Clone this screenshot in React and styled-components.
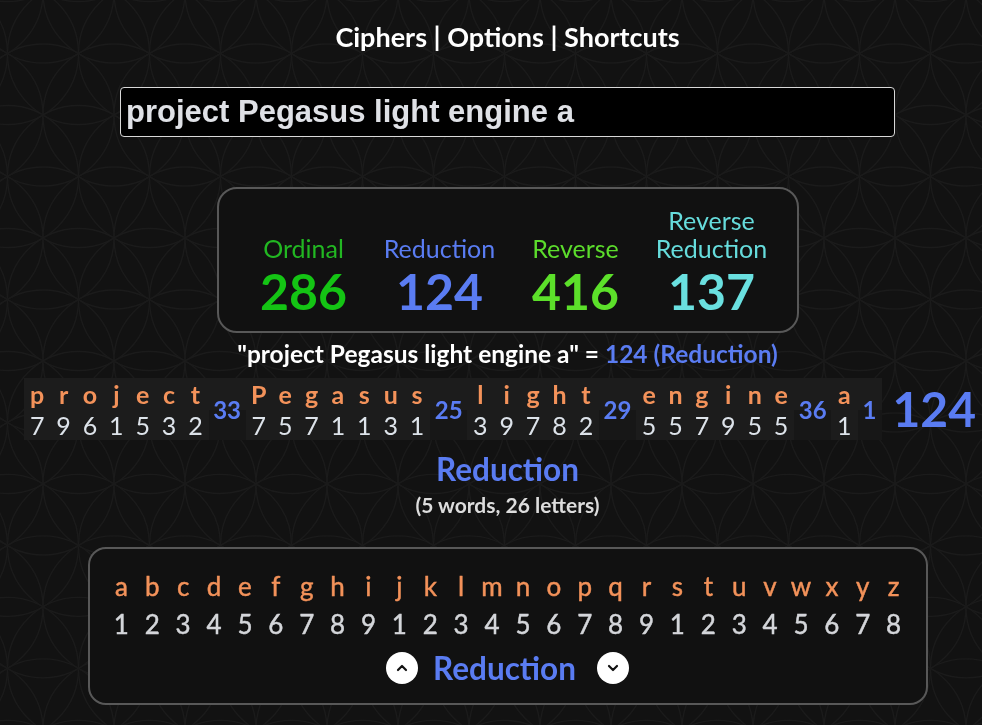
import React from 'react';
import styled, { createGlobalStyle } from 'styled-components';

const GlobalStyle = createGlobalStyle`
  html, body {
    margin: 0;
    padding: 0;
    background: #121212;
    overflow: hidden;
  }
  body {
    font-family: Lato, "Noto Sans", sans-serif;
    color: #e6e6e6;
  }
`;

const BLUE = '#5a7cf2';
const ORANGE = '#f3925a';

const ciphers = [
  { label: ['Ordinal'], value: 286, label_color: '#22b722', color: '#14c414' },
  { label: ['Reduction'], value: 124, label_color: BLUE, color: BLUE },
  { label: ['Reverse'], value: 416, label_color: '#5cdc2c', color: '#5ce02a' },
  { label: ['Reverse', 'Reduction'], value: 137, label_color: '#66dcdc', color: '#6ae0e0' },
];

const reduction = (ch) => {
  const n = ch.toLowerCase().charCodeAt(0) - 96;
  return ((n - 1) % 9) + 1;
};

const phrase = 'project Pegasus light engine a';
const words = phrase.split(' ');
const alphabet = 'abcdefghijklmnopqrstuvwxyz'.split('');

/* flower-of-life backdrop */
const Backdrop = () => {
  const r = 71;
  const dy = (r * Math.sqrt(3)) / 2;
  const circles = [];
  for (let row = -3; row < 16; row++) {
    const y = 115 + row * dy;
    const off = row % 2 === 0 ? 0 : r / 2;
    for (let col = -3; col < 18; col++) {
      circles.push(<circle key={`${row}-${col}`} cx={43 + off + col * r} cy={y} r={r} />);
    }
  }
  return (
    <BackdropSvg width="1015" height="725" viewBox="0 0 1015 725">
      <g fill="none" stroke="#1b1b1b" strokeWidth="1.4">{circles}</g>
    </BackdropSvg>
  );
};

const BackdropSvg = styled.svg`
  position: fixed;
  top: 0;
  left: 0;
  z-index: 0;
  pointer-events: none;
`;

const Page = styled.div`
  position: relative;
  z-index: 1;
  width: 1015px;
  display: flex;
  flex-direction: column;
  align-items: center;
`;

const Nav = styled.div`
  margin-top: 21px;
  font-size: 27px;
  line-height: 32px;
  font-weight: 700;
  color: #ffffff;
`;

const PhraseInput = styled.input`
  box-sizing: border-box;
  margin-top: 34px;
  width: 775px;
  height: 50px;
  background: #000;
  border: 1px solid #d8d8d8;
  border-radius: 4px;
  padding: 0 5px;
  font-family: "Liberation Sans", Arial, sans-serif;
  font-weight: 700;
  font-size: 31px;
  color: #dfe1e6;
  outline: none;
`;

const CipherBox = styled.div`
  box-sizing: border-box;
  margin-top: 50px;
  width: 582px;
  height: 146px;
  border: 2px solid #585858;
  border-radius: 20px;
  background: #111111;
  display: flex;
  justify-content: center;
  align-items: flex-end;
  padding-bottom: 13px;
`;

const CipherCol = styled.div`
  width: 136px;
  display: flex;
  flex-direction: column;
  align-items: center;
  text-align: center;
`;

const CipherLabel = styled.div`
  font-size: 25px;
  line-height: 28px;
  color: ${(p) => p.$color};
`;

const CipherValue = styled.div`
  margin-top: 2px;
  font-size: 50px;
  font-weight: 700;
  line-height: 54px;
  color: ${(p) => p.$color};
`;

const Sentence = styled.div`
  margin-top: 7px;
  font-size: 24.5px;
  line-height: 28px;
  font-weight: 700;
  color: #ffffff;
`;

const Blue = styled.span`
  color: ${BLUE};
`;

const BreakdownRow = styled.div`
  margin-top: 10px;
  display: flex;
  align-items: center;
`;

const Table = styled.div`
  display: flex;
  background: #1c1c1c;
`;

const WordBlock = styled.div`
  display: flex;
  flex-direction: column;
`;

const CellRow = styled.div`
  display: flex;
  height: ${(p) => p.$h}px;
  align-items: center;
`;

const LetterCell = styled.div`
  width: 26.4px;
  text-align: center;
  font-size: 25px;
  font-weight: 700;
  color: ${ORANGE};
  line-height: 32px;
`;

const NumberCell = styled.div`
  width: 26.4px;
  text-align: center;
  font-size: 25px;
  color: #dde3ea;
  line-height: 30px;
`;

const SumCell = styled.div`
  padding: 0 4.5px;
  min-width: 15px;
  display: flex;
  align-items: center;
  justify-content: center;
  font-size: 24px;
  font-weight: 700;
  color: ${BLUE};
  background: linear-gradient(#1c1c1c 0 32px, #171717 32px 100%);
`;

const Total = styled.div`
  margin-left: 11px;
  padding-right: 15px;
  font-size: 48px;
  font-weight: 700;
  line-height: 56px;
  color: ${BLUE};
`;

const CipherName = styled.div`
  margin-top: 11px;
  font-size: 31.5px;
  line-height: 36px;
  font-weight: 700;
  color: ${BLUE};
`;

const Counts = styled.div`
  margin-top: 6px;
  font-size: 21px;
  line-height: 24px;
  font-weight: 700;
  color: #dddddd;
`;

const ChartBox = styled.div`
  box-sizing: border-box;
  margin-top: 30px;
  width: 840px;
  height: 158px;
  border: 2px solid #585858;
  border-radius: 18px;
  background: #111111;
  display: flex;
  flex-direction: column;
  align-items: center;
  padding-top: 21px;
`;

const ChartRow = styled.div`
  display: flex;
  height: ${(p) => p.$h}px;
  align-items: center;
`;

const ChartCell = styled.div`
  width: 30.9px;
  text-align: center;
  font-size: 26px;
  color: ${(p) => p.$color};
  -webkit-text-stroke: 0.45px ${(p) => p.$color};
`;

const Switcher = styled.div`
  margin-top: 3px;
  display: flex;
  align-items: center;
`;

const RoundButton = styled.button`
  width: 32px;
  height: 32px;
  border-radius: 50%;
  border: none;
  background: #ffffff;
  padding: 0;
  display: flex;
  align-items: center;
  justify-content: center;
  cursor: pointer;
  margin: ${(p) => (p.$right ? '0 0 0 21px' : '0 15px 0 0')};
`;

const SwitcherLabel = styled.div`
  font-size: 31.5px;
  font-weight: 700;
  line-height: 40px;
  color: ${BLUE};
`;

const Chevron = ({ up }) => (
  <svg width="14" height="14" viewBox="0 0 14 14">
    <path
      d={up ? 'M3 9 L7 5 L11 9' : 'M3 5 L7 9 L11 5'}
      fill="none"
      stroke="#111"
      strokeWidth="2.2"
      strokeLinecap="round"
      strokeLinejoin="round"
    />
  </svg>
);

export default function App() {
  const sums = words.map((w) => w.split('').reduce((a, c) => a + reduction(c), 0));
  const total = sums.reduce((a, b) => a + b, 0);

  return (
    <>
      <GlobalStyle />
      <Backdrop />
      <Page>
        <Nav>Ciphers | Options | Shortcuts</Nav>
        <PhraseInput defaultValue={phrase} />

        <CipherBox>
          {ciphers.map((c) => (
            <CipherCol key={c.label.join(' ')}>
              {c.label.map((l) => (
                <CipherLabel key={l} $color={c.label_color}>{l}</CipherLabel>
              ))}
              <CipherValue $color={c.color}>{c.value}</CipherValue>
            </CipherCol>
          ))}
        </CipherBox>

        <Sentence>
          "{phrase}" = <Blue>{total} (Reduction)</Blue>
        </Sentence>

        <BreakdownRow>
          <Table>
            {words.map((w, i) => (
              <React.Fragment key={w}>
                <WordBlock>
                  <CellRow $h={32}>
                    {w.split('').map((ch, j) => (
                      <LetterCell key={j}>{ch}</LetterCell>
                    ))}
                  </CellRow>
                  <CellRow $h={30}>
                    {w.split('').map((ch, j) => (
                      <NumberCell key={j}>{reduction(ch)}</NumberCell>
                    ))}
                  </CellRow>
                </WordBlock>
                <SumCell>{sums[i]}</SumCell>
              </React.Fragment>
            ))}
          </Table>
          <Total>{total}</Total>
        </BreakdownRow>

        <CipherName>Reduction</CipherName>
        <Counts>(5 words, 26 letters)</Counts>

        <ChartBox>
          <ChartRow $h={32}>
            {alphabet.map((ch) => (
              <ChartCell key={ch} $color={ORANGE}>{ch}</ChartCell>
            ))}
          </ChartRow>
          <ChartRow $h={43}>
            {alphabet.map((ch) => (
              <ChartCell key={ch} $color="#d4d6da">{reduction(ch)}</ChartCell>
            ))}
          </ChartRow>
          <Switcher>
            <RoundButton aria-label="previous cipher">
              <Chevron up />
            </RoundButton>
            <SwitcherLabel>Reduction</SwitcherLabel>
            <RoundButton $right aria-label="next cipher">
              <Chevron />
            </RoundButton>
          </Switcher>
        </ChartBox>
      </Page>
    </>
  );
}
